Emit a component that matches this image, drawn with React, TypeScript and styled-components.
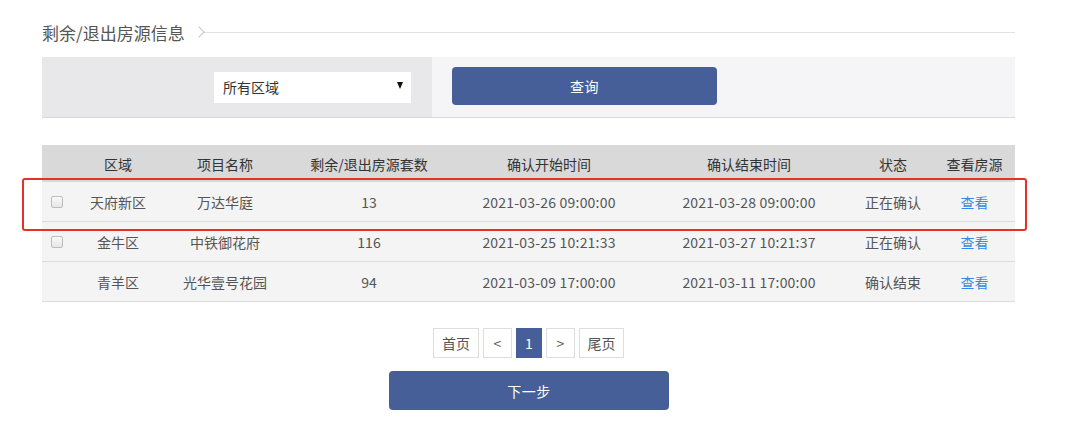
import styled, { createGlobalStyle } from "styled-components";

const GlobalStyle = createGlobalStyle`
  body {
    margin: 0;
    background: #ffffff;
    font-family: "Noto Sans CJK SC", "Noto Sans", sans-serif;
  }
`;

const primary = "#465f98";

const Page = styled.div`
  width: 973px;
  padding: 22px 0 0 42px;
  display: flex;
  flex-direction: column;
`;

const TitleRow = styled.div`
  display: flex;
  align-items: center;
  height: 20px;
`;

const Title = styled.span`
  font-size: 17px;
  color: #555;
  white-space: nowrap;
`;

const Chevron = styled.span`
  width: 7px;
  height: 7px;
  border-top: 1px solid #c8c8c8;
  border-right: 1px solid #c8c8c8;
  transform: rotate(45deg);
  margin: 0 0 0 10px;
  flex-shrink: 0;
`;

const TitleLine = styled.div`
  flex: 1;
  height: 1px;
  background: #e2e2e2;
`;

const FilterBar = styled.div`
  margin-top: 15px;
  height: 60px;
  display: flex;
  border-bottom: 1px solid #d8d8da;
`;

const FilterLeft = styled.div`
  width: 390px;
  background: #e8e8ea;
  display: flex;
  align-items: center;
  padding-left: 172px;
  box-sizing: border-box;
`;

const FilterRight = styled.div`
  flex: 1;
  background: #f5f4f7;
  display: flex;
  align-items: center;
  padding: 0 0 3px 20px;
`;

const Select = styled.div`
  width: 197px;
  height: 31px;
  background: #fff;
  display: flex;
  align-items: center;
  justify-content: space-between;
  padding: 0 8px 0 9px;
  box-sizing: border-box;
  font-size: 14px;
  color: #333;
`;

const Caret = styled.span`
  width: 0;
  height: 0;
  border-left: 3.5px solid transparent;
  border-right: 3.5px solid transparent;
  border-top: 7px solid #111;
  margin-top: -4px;
`;

const Button = styled.div<{ $w: number; $h: number }>`
  width: ${(p) => p.$w}px;
  height: ${(p) => p.$h}px;
  background: ${primary};
  border-radius: 4px;
  color: #fff;
  font-size: 14px;
  display: flex;
  align-items: center;
  justify-content: center;
  letter-spacing: 0.5px;
`;

const Table = styled.div`
  margin-top: 27px;
  display: flex;
  flex-direction: column;
`;

const cols = "30px 92px 122px 166px 194px 206px 82px 81px";

const HeadRow = styled.div`
  display: grid;
  grid-template-columns: ${cols};
  height: 37px;
  align-items: center;
  background: #d9d9d9;
  font-size: 14px;
  color: #333;
`;

const Row = styled.div<{ $marked?: boolean }>`
  position: relative;
  z-index: ${(p) => (p.$marked ? 2 : 1)};
  display: grid;
  grid-template-columns: ${cols};
  height: 39px;
  align-items: center;
  background: #f4f4f4;
  border-bottom: 1px solid #dcdcdc;
  font-size: 14px;
  color: #555;
`;

const Cell = styled.div`
  text-align: center;
  white-space: nowrap;
`;

const DateCell = styled(Cell)`
  letter-spacing: 0.2px;
`;

const CheckCell = styled.div`
  display: flex;
  justify-content: center;
`;

const Checkbox = styled.span`
  width: 10px;
  height: 10px;
  border: 1px solid #bdbdbd;
  border-radius: 2px;
  background: linear-gradient(#fafafa, #e6e6e6);
`;

const Link = styled.span`
  color: #2f8be6;
`;

const Highlight = styled.div`
  position: absolute;
  left: -20px;
  right: -12px;
  top: -4px;
  bottom: -10px;
  border: 2.5px solid #e8302b;
  border-radius: 3px;
  pointer-events: none;
`;

const Pager = styled.div`
  margin-top: 26px;
  display: flex;
  justify-content: center;
  gap: 4px;
`;

const PageBtn = styled.div<{ $w: number; $active?: boolean }>`
  width: ${(p) => p.$w}px;
  height: 30px;
  box-sizing: border-box;
  border: 1px solid ${(p) => (p.$active ? primary : "#dedede")};
  background: ${(p) => (p.$active ? primary : "#fff")};
  color: ${(p) => (p.$active ? "#fff" : "#555")};
  font-size: 14px;
  display: flex;
  align-items: center;
  justify-content: center;
`;

const NextWrap = styled.div`
  margin-top: 13px;
  display: flex;
  padding-left: 347px;
`;

type Item = {
  area: string;
  name: string;
  count: string;
  start: string;
  end: string;
  status: string;
  check: boolean;
  mark?: boolean;
};

const rows: Item[] = [
  { area: "天府新区", name: "万达华庭", count: "13", start: "2021-03-26 09:00:00", end: "2021-03-28 09:00:00", status: "正在确认", check: true, mark: true },
  { area: "金牛区", name: "中铁御花府", count: "116", start: "2021-03-25 10:21:33", end: "2021-03-27 10:21:37", status: "正在确认", check: true },
  { area: "青羊区", name: "光华壹号花园", count: "94", start: "2021-03-09 17:00:00", end: "2021-03-11 17:00:00", status: "确认结束", check: false },
];

export default function App() {
  return (
    <>
      <GlobalStyle />
      <Page>
        <TitleRow>
          <Title>剩余/退出房源信息</Title>
          <Chevron />
          <TitleLine />
        </TitleRow>
        <FilterBar>
          <FilterLeft>
            <Select>
              所有区域
              <Caret />
            </Select>
          </FilterLeft>
          <FilterRight>
            <Button $w={265} $h={38}>查询</Button>
          </FilterRight>
        </FilterBar>
        <Table>
          <HeadRow>
            <Cell />
            <Cell>区域</Cell>
            <Cell>项目名称</Cell>
            <Cell>剩余/退出房源套数</Cell>
            <Cell>确认开始时间</Cell>
            <Cell>确认结束时间</Cell>
            <Cell>状态</Cell>
            <Cell>查看房源</Cell>
          </HeadRow>
          {rows.map((r) => (
            <Row key={r.area} $marked={r.mark}>
              <CheckCell>{r.check && <Checkbox />}</CheckCell>
              <Cell>{r.area}</Cell>
              <Cell>{r.name}</Cell>
              <Cell>{r.count}</Cell>
              <DateCell>{r.start}</DateCell>
              <DateCell>{r.end}</DateCell>
              <Cell>{r.status}</Cell>
              <Cell>
                <Link>查看</Link>
              </Cell>
              {r.mark && <Highlight />}
            </Row>
          ))}
        </Table>
        <Pager>
          <PageBtn $w={46}>首页</PageBtn>
          <PageBtn $w={29}>&lt;</PageBtn>
          <PageBtn $w={26} $active>1</PageBtn>
          <PageBtn $w={29}>&gt;</PageBtn>
          <PageBtn $w={45}>尾页</PageBtn>
        </Pager>
        <NextWrap>
          <Button $w={280} $h={39}>下一步</Button>
        </NextWrap>
      </Page>
    </>
  );
}
